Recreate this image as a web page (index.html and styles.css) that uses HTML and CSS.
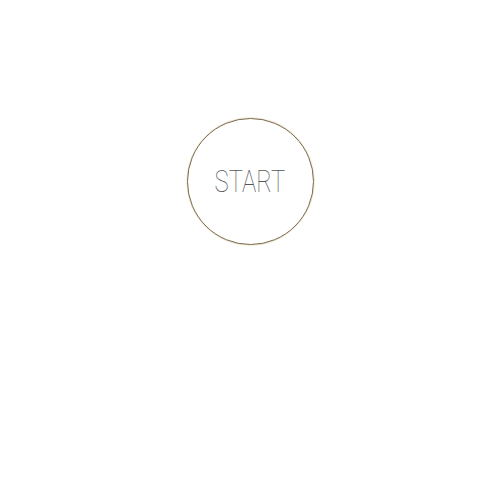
FILE: index.html
```html
<!DOCTYPE html>
<html>
<head>
<meta charset="utf-8">
<link rel="stylesheet" href="styles.css">
</head>
<body>
<div class="stage">
  <button class="start"><span class="label">START</span></button>
</div>
</body>
</html>
```
FILE: styles.css
```css
html, body {
  margin: 0;
  padding: 0;
  background: #fff;
}
.stage {
  width: 500px;
  height: 500px;
  display: flex;
  justify-content: center;
  padding-top: 118px;
  box-sizing: border-box;
}
.start {
  width: 127px;
  height: 127px;
  border-radius: 50%;
  border: 1px solid #7d6e52;
  box-shadow: 0 0 1px 0.5px #e6ddc6;
  background: #fff;
  display: flex;
  align-items: center;
  justify-content: center;
  padding: 0;
  cursor: pointer;
}
.label {
  display: inline-block;
  font-family: Roboto, "DejaVu Sans", sans-serif;
  font-weight: 100;
  font-size: 31px;
  line-height: 1;
  color: #555;
  transform: scaleX(0.77);
}
```
